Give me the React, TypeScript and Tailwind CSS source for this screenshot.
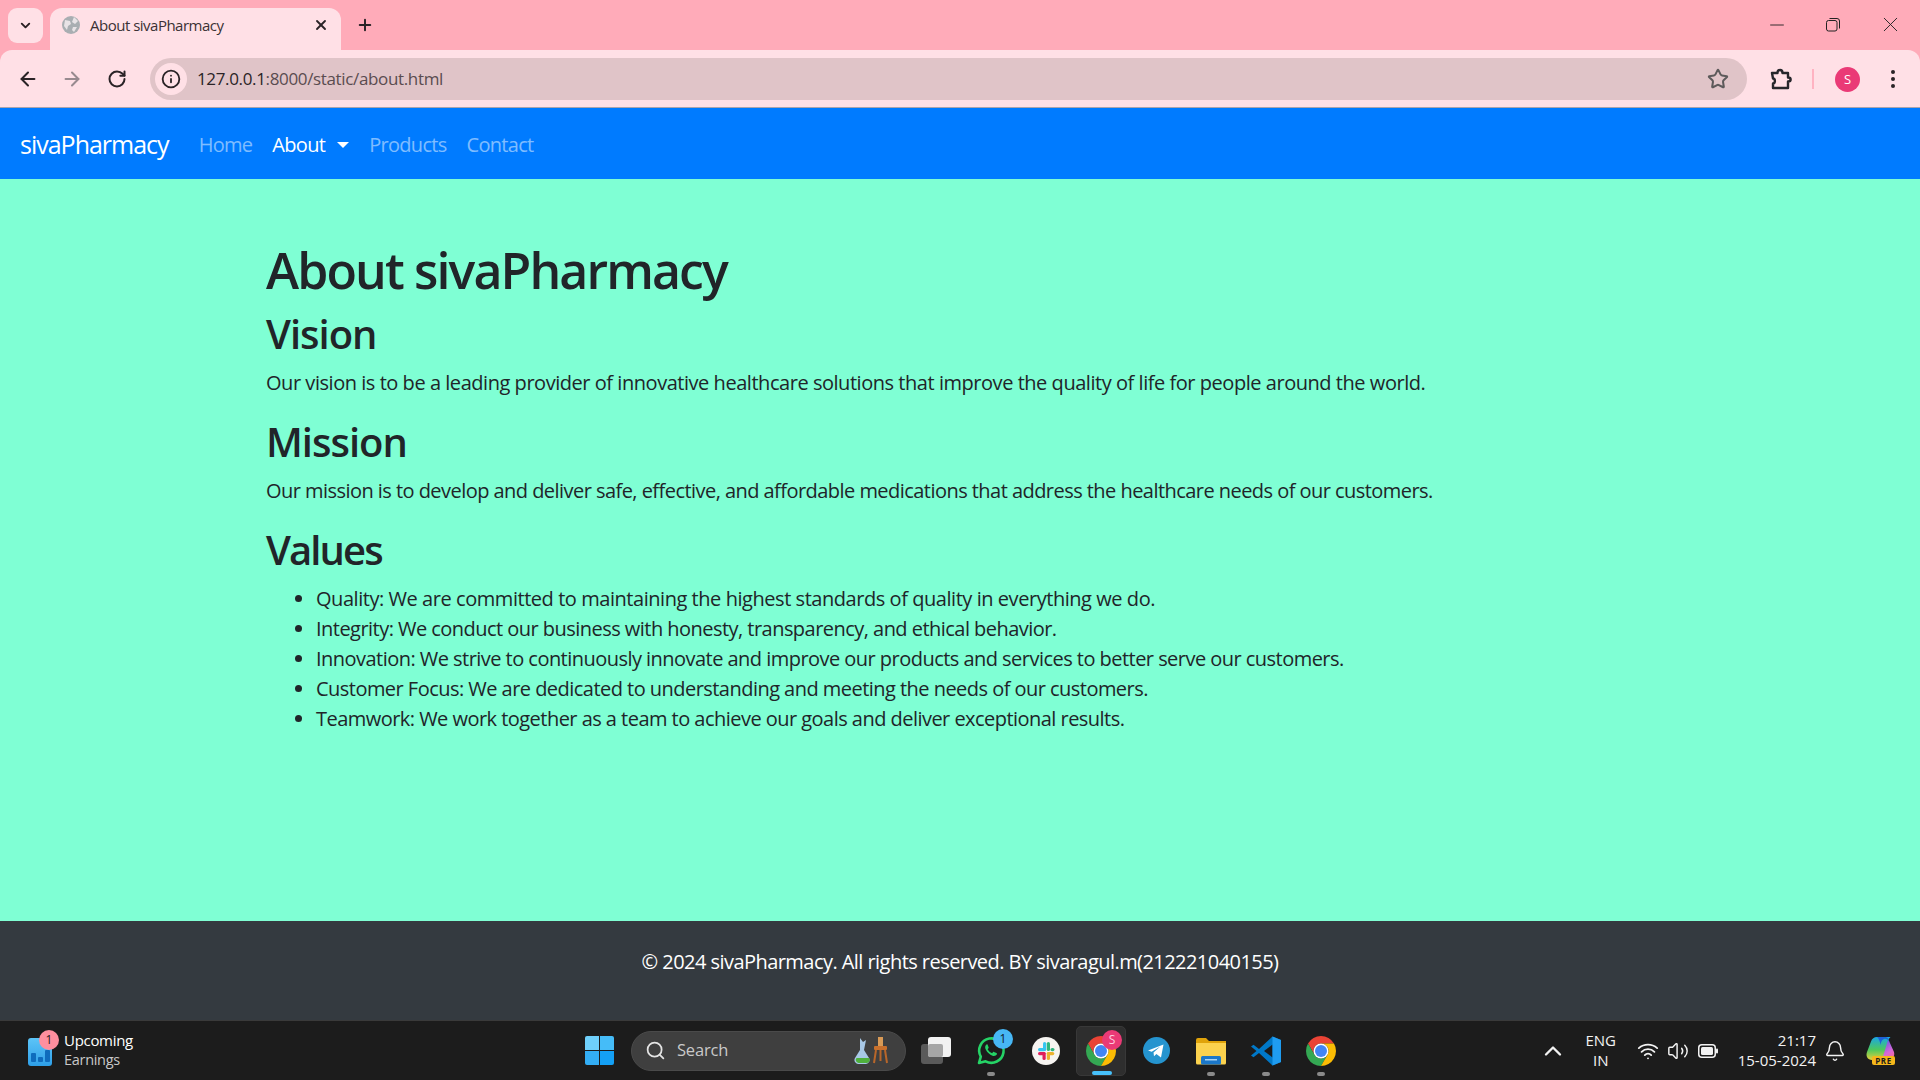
import React from 'react';
import { ArrowLeft, ArrowRight, RotateCw, Info, Star, X, Plus, ChevronDown, ChevronUp, Minus, Search, Bell, Wifi, Volume2 } from 'lucide-react';

const ChromeLogo = ({ size = 30 }: { size?: number }) => (
  <svg width={size} height={size} viewBox="4 4 40 40">
    <path fill="#ea4335" d="M6.68 14A20 20 0 0 1 41.32 14L24 14A10 10 0 0 0 15.34 29Z" />
    <path fill="#34a853" d="M6.68 14A20 20 0 0 0 24 44L32.66 29A10 10 0 0 1 15.34 29Z" />
    <path fill="#fbbc04" d="M24 44A20 20 0 0 0 41.32 14L24 14A10 10 0 0 1 32.66 29Z" />
    <circle cx="24" cy="24" r="10" fill="#fff" />
    <circle cx="24" cy="24" r="8" fill="#4285f4" />
  </svg>
);

const WhatsApp = () => (
  <svg width="30" height="30" viewBox="0 0 30 30" fill="none">
    <path d="M3 27l1.8-6.4A12.2 12.2 0 1 1 9.6 25.3L3 27z" stroke="#25d366" strokeWidth="2.6" strokeLinejoin="round" />
    <path d="M10.5 8.5c-1.5 1-1.8 3-.6 5.3 1.3 2.6 3.8 5 6.6 5.9 2 .6 3.6 0 4.4-1.5.2-.5 0-.9-.4-1.1l-2.6-1.2c-.4-.2-.7 0-1 .3l-.8 1c-1.900-.7-3.500-2.200-4.500-4l.8-.9c.3-.3.3-.6.2-1l-1-2.500c-.2-.5-.6-.6-1.100-.3z" fill="#25d366" />
  </svg>
);

const Slack = () => (
  <svg width="28" height="28" viewBox="0 0 28 28">
    <circle cx="14" cy="14" r="14" fill="#f6f4f1" />
    <rect x="11" y="5" width="3.200" height="9" rx="1.600" fill="#36c5f0" />
    <rect x="6" y="11" width="7.500" height="3.200" rx="1.600" fill="#36c5f0" />
    <rect x="14.800" y="5" width="3.200" height="9" rx="1.600" fill="#2eb67d" />
    <rect x="18.500" y="11" width="4" height="3.200" rx="1.600" fill="#2eb67d" />
    <rect x="14.800" y="15" width="7.500" height="3.200" rx="1.600" fill="#ecb22e" />
    <rect x="14.800" y="15" width="3.200" height="8" rx="1.600" fill="#ecb22e" />
    <rect x="6" y="15" width="7.500" height="3.200" rx="1.600" fill="#e01e5a" />
    <rect x="10.500" y="15" width="3.200" height="8" rx="1.600" fill="#e01e5a" />
  </svg>
);

const Telegram = () => (
  <svg width="27" height="27" viewBox="0 0 27 27">
    <circle cx="13.500" cy="13.500" r="13.500" fill="#2594cf" />
    <path d="M5 13.500l15.500-6-2.500 13-4.600-3.400-2.400 2.200-.5-3.700 6.800-6-8.600 5.200z" fill="#fff" />
  </svg>
);

const Folder = () => (
  <svg width="30" height="28" viewBox="0 0 30 28">
    <path d="M0 3a2 2 0 0 1 2-2h8l3 3h17v6H0z" fill="#e0a30a" />
    <path d="M0 6h30v20a1.500 1.500 0 0 1-1.500 1.500h-27A1.500 1.500 0 0 1 0 26z" fill="#fbd24e" />
    <rect x="5" y="19" width="20" height="8.500" rx="1.500" fill="#1b77c9" />
    <rect x="9" y="22" width="12" height="1.500" fill="#a8d4f5" />
  </svg>
);

const VsCode = () => (
  <svg width="30" height="30" viewBox="0 0 30 30">
    <path d="M21.500 0.500L30 4v22l-8.500 3.500L8 17l-5.500 4.300L0 19.500 5.500 15 0 10.500l2.500-1.800L8 13z" fill="#0078c8" />
    <path d="M21.500 8.500L13 15l8.500 6.500z" fill="#1b1b1b" />
    <path d="M21.500 0.500L30 4v22l-8.500 3.500z" fill="#1f9cf0" />
  </svg>
);

const Copilot = () => (
  <div className="relative w-[30px] h-[30px]">
    <svg width="30" height="25" viewBox="0 0 30 25">
      <defs>
        <linearGradient id="cpa" x1="0.500" y1="0" x2="0.500" y2="1">
          <stop offset="0" stopColor="#1aa6e6" />
          <stop offset="0.55" stopColor="#4cc95e" />
          <stop offset="1" stopColor="#e6cf3a" />
        </linearGradient>
        <linearGradient id="cpb" x1="0.300" y1="0" x2="0.800" y2="1">
          <stop offset="0" stopColor="#1e62d8" />
          <stop offset="0.35" stopColor="#8a5ee0" />
          <stop offset="0.7" stopColor="#d868d8" />
          <stop offset="1" stopColor="#f46a9c" />
        </linearGradient>
      </defs>
      <path d="M12 1h7c3 0 4.500 2 5.500 5l4.500 10c1 4-1 7-5 7H14l3-12c.6-3-1-7-5-10z" fill="url(#cpb)" />
      <path d="M12 1c-3 0-5 1.500-6 4.500L2 16c-1.500 4 .5 8 5 8h6c3 0 4.500-2 5.500-5l3-10c.8-3 1.500-6 4-8z" fill="url(#cpa)" />
      <path d="M12 1h8c2 0 3.500 1 4.500 5C23 3 21 2.500 19 3c-2 .5-3 3-3.500 6C15 5 13.500 2 12 1z" fill="#1e62d8" />
    </svg>
    <span className="absolute right-[0px] bottom-[1px] w-[23px] h-[9px] rounded-[2px] bg-[#f5b71b] text-[#1c1c1c] text-[8px] leading-[9px] font-bold text-center tracking-[0.5px]">PRE</span>
  </div>
);

const Dot = () => <span className="w-[8px] h-[4px] rounded-full bg-[#8a8a8a]" />;

const TaskItem = ({ children, dot, active }: { children: React.ReactNode; dot?: boolean; active?: boolean }) => (
  <div className={`relative w-[50px] h-[50px] mr-[5px] flex items-center justify-center rounded-[5px] ${active ? 'bg-[#2e2e2e] border border-[#383838]' : ''}`}>
    {children}
    {dot && <span className="absolute bottom-0 left-0 right-0 flex justify-center"><Dot /></span>}
    {active && <span className="absolute bottom-0 left-[15px] w-[20px] h-[4px] rounded-full bg-[#47c1fb]" />}
  </div>
);

const Badge = ({ label, color, text }: { label: string; color: string; text: string }) => (
  <span className={`absolute top-[3px] right-[3px] w-[20px] h-[20px] rounded-full text-[12px] leading-[20px] text-center ${color} ${text}`}>{label}</span>
);

const BrowserChrome = () => (
  <header className="h-[108px] bg-[#ffabb9] flex flex-col">
    <div className="h-[50px] flex items-end pl-[8px]">
      <div className="w-[35px] h-[35px] mb-[7px] rounded-[9px] bg-[#ffe0e6] flex items-center justify-center">
        <ChevronDown size={15} strokeWidth={3} className="text-[#2a1f22]" />
      </div>
      <div className="ml-[7px] w-[291px] h-[42px] rounded-t-[12px] bg-[#ffe0e6] flex items-center pl-[12px] pr-[12px] pb-[8px]">
        <svg width="18" height="18" viewBox="0 0 18 18" className="shrink-0">
          <circle cx="9" cy="9" r="9" fill="#a9aeb2" />
          <path d="M3 4l5 1 1 3-3 2-1 4-3-4zM12 1l4 4-3 3-3-2zM11 11l4 0-3 5-2-2z" fill="#e8e3e6" />
        </svg>
        <span className="ml-[10px] text-[15px] text-[#3b3134] tracking-[-0.5px] flex-1">About sivaPharmacy</span>
        <X size={16} strokeWidth={2.800} className="text-[#2a2326]" />
      </div>
      <Plus size={18} strokeWidth={2.600} className="ml-[15px] mb-[16px] text-[#2a2326]" />
      <div className="ml-auto flex items-center h-full mr-[17px] gap-[38px] pb-[1px]">
        <Minus size={22} strokeWidth={1} className="text-[#222]" />
        <svg width="14" height="14" viewBox="0 0 14 14" fill="none" stroke="#222" strokeWidth="1">
          <rect x="0.500" y="2.500" width="10.500" height="10.500" rx="2" />
          <path d="M3.500 0.500h7.500a2.500 2.500 0 0 1 2.500 2.500v7.500" />
        </svg>
        <X size={25} strokeWidth={0.900} className="text-[#222]" />
      </div>
    </div>
    <div className="h-[58px] rounded-t-[12px] bg-[#ffe0e6] border-b border-[#a9a3ac] flex items-center pl-[17px] pr-[17px] pt-[1px]">
      <ArrowLeft size={22} strokeWidth={2.200} className="text-[#2a2326]" />
      <ArrowRight size={22} strokeWidth={2.200} className="ml-[22px] text-[#988a8f]" />
      <RotateCw size={20} strokeWidth={2.400} className="ml-[24px] text-[#2a2326]" />
      <div className="ml-[23px] w-[1597px] h-[42px] rounded-full bg-[#e0c4c8] flex items-center pl-[5px] pr-[18px]">
        <span className="w-[32px] h-[32px] rounded-full bg-[#ffe0e6] flex items-center justify-center">
          <Info size={20} strokeWidth={2.200} className="text-[#2a2326]" />
        </span>
        <span className="ml-[10px] text-[17px] text-[#2a2326] tracking-[-0.35px]">
          127.0.0.1<span className="text-[#5a4c50]">:8000/static/about.html</span>
        </span>
        <Star size={22} strokeWidth={2.200} className="ml-auto text-[#5d5a5b]" />
      </div>
      <svg width="22" height="22" viewBox="0 0 22 22" fill="none" stroke="#26262b" strokeWidth="2.400" strokeLinejoin="round" className="ml-[23px] shrink-0">
        <path d="M2 5h5.500c0-4 5-4 5 0H18v4.500c3.500 0 3.500 4 0 4V20H3v-4.500c2.500 0 2.500-5 0-5z" />
      </svg>
      <span className="ml-[20px] w-[2px] h-[20px] bg-[#ffb3c2]" />
      <span className="ml-[21px] w-[25px] h-[25px] rounded-full bg-[#ea3a76] text-white text-[13px] leading-[25px] text-center">S</span>
      <div className="ml-[31px] flex flex-col gap-[3px]">
        <span className="w-[4px] h-[4px] rounded-full bg-[#2a2326]" />
        <span className="w-[4px] h-[4px] rounded-full bg-[#2a2326]" />
        <span className="w-[4px] h-[4px] rounded-full bg-[#2a2326]" />
      </div>
    </div>
  </header>
);

const Navbar = () => (
  <nav className="h-[71px] bg-[#007bff] flex items-center pl-[20px] pt-[2px]">
    <a className="text-[25px] text-white tracking-[-1px] mr-[30px]">sivaPharmacy</a>
    <ul className="flex items-center text-[20px] tracking-[-0.700px] text-white/50">
      <li className="mr-[20px]">Home</li>
      <li className="mr-[20px] flex items-center text-white">
        About
        <span className="ml-[12px] w-0 h-0 border-x-[6px] border-x-transparent border-t-[6px] border-t-white" />
      </li>
      <li className="mr-[20px]">Products</li>
      <li>Contact</li>
    </ul>
  </nav>
);

const values = [
  'Integrity: We conduct our business with honesty, transparency, and ethical behavior.',
  'Innovation: We strive to continuously innovate and improve our products and services to better serve our customers.',
  'Customer Focus: We are dedicated to understanding and meeting the needs of our customers.',
  'Teamwork: We work together as a team to achieve our goals and deliver exceptional results.',
];

const Main = () => (
  <main className="flex-1 bg-[#7fffd4] text-[#212529] text-[20px] leading-[30px] tracking-[-0.535px] pt-[61px] pl-[266px] pr-[266px]">
    <h1 className="text-[50px] leading-[60px] font-[550] mb-[10px] tracking-[-1.870px]">About sivaPharmacy</h1>
    <h2 className="text-[40px] leading-[48px] font-[550] mb-[10px] tracking-[-1px]">Vision</h2>
    <p className="mb-[20px] tracking-[-0.46px]">Our vision is to be a leading provider of innovative healthcare solutions that improve the quality of life for people around the world.</p>
    <h2 className="text-[40px] leading-[48px] font-[550] mb-[10px] tracking-[-1px]">Mission</h2>
    <p className="mb-[20px] tracking-[-0.545px]">Our mission is to develop and deliver safe, effective, and affordable medications that address the healthcare needs of our customers.</p>
    <h2 className="text-[40px] leading-[48px] font-[550] mb-[10px] tracking-[-1.900px]">Values</h2>
    <ul className="list-disc pl-[50px]">
      <li className="tracking-[-0.45px]">Quality: We are committed to maintaining the highest standards of quality in everything we do.</li>
      {values.map((v) => (
        <li key={v}>{v}</li>
      ))}
    </ul>
  </main>
);

const Footer = () => (
  <footer className="h-[99px] bg-[#343a40] text-white text-[20px] leading-[30px] tracking-[-0.550px] text-center pt-[26px]">
    © 2024 sivaPharmacy. All rights reserved. BY sivaragul.m(212221040155)
  </footer>
);

const Taskbar = () => (
  <div className="h-[60px] bg-[#1c1c1c] border-t border-[#3a3a3a] flex items-center text-white">
    <div className="w-[585px] pl-[28px] flex items-center shrink-0">
      <div className="relative w-[24px] h-[28px] mt-[2px] rounded-[3px] bg-gradient-to-b from-[#5cc4f7] to-[#2d9fe8] flex items-end justify-center gap-[2px] pb-[4px]">
        <span className="w-[5px] h-[9px] bg-[#0f6cbd] rounded-[1px]" />
        <span className="w-[5px] h-[5px] bg-[#0f6cbd] rounded-[1px]" />
        <span className="w-[5px] h-[12px] bg-[#0f6cbd] rounded-[1px]" />
        <span className="absolute top-[-8px] right-[-7px] w-[20px] h-[20px] rounded-full bg-[#ff8f9f] text-[#2a1a1d] text-[12px] leading-[20px] text-center">1</span>
      </div>
      <div className="ml-[12px] text-[15px] leading-[20px] tracking-[-0.300px] mt-[-1px]">
        <div>Upcoming</div>
        <div className="text-[#c8c8c8] text-[14.500px]">Earnings</div>
      </div>
    </div>
    <div className="grid grid-cols-2 gap-[1px] w-[29px] h-[29px] shrink-0">
      <span className="bg-[#6fd0fb] rounded-tl-[2px]" />
      <span className="bg-[#45bcf8] rounded-tr-[2px]" />
      <span className="bg-[#33aef5] rounded-bl-[2px]" />
      <span className="bg-[#14a0f5] rounded-br-[2px]" />
    </div>
    <div className="ml-[17px] w-[275px] h-[40px] rounded-full bg-[#3f3f3f] border border-[#4a4a4a] flex items-center pl-[13px] pr-[17px] shrink-0">
      <Search size={21} strokeWidth={2} className="text-[#e4e4e4]" />
      <span className="ml-[11px] text-[16.500px] text-[#c9c9c9] tracking-[-0.200px]">Search</span>
      <svg width="34" height="30" viewBox="0 0 34 30" className="ml-auto">
        <path d="M6 2l3 4 3-2-1 5-1 5 5 8a4 4 0 0 1-3 6H4a4 4 0 0 1-3-6l5-8z" fill="#a8c8e6" />
        <path d="M2.500 22h12.500a3 3 0 0 1-2 5H4.500a3 3 0 0 1-2-5z" fill="#4fb03c" />
        <rect x="24" y="1" width="5" height="9" fill="#d89a56" />
        <rect x="20" y="10" width="13" height="4" rx="1" fill="#c8702c" />
        <path d="M22 14l-2 13M31 14l2 13M26.500 14v11" stroke="#b8662a" strokeWidth="2" fill="none" />
      </svg>
    </div>
    <div className="relative w-[50px] h-[50px] ml-[5px] shrink-0">
      <span className="absolute left-[10px] top-[18px] w-[22px] h-[20px] rounded-[3px] bg-[#5a5a5a]" />
      <span className="absolute left-[17px] top-[11px] w-[23px] h-[20px] rounded-[3px] bg-[#f2f2f2]" />
      <span className="absolute left-[17px] top-[18px] w-[15px] h-[13px] rounded-[2px] bg-[#a6a6a6]" />
    </div>
    <div className="flex items-center ml-[5px] shrink-0">
      <TaskItem dot>
        <WhatsApp />
        <Badge label="1" color="bg-[#47b7f5]" text="text-[#10222e]" />
      </TaskItem>
      <TaskItem><Slack /></TaskItem>
      <TaskItem active>
        <ChromeLogo />
        <Badge label="S" color="bg-[#ea3a76]" text="text-[#ffd0e0]" />
      </TaskItem>
      <TaskItem><Telegram /></TaskItem>
      <TaskItem dot><Folder /></TaskItem>
      <TaskItem dot><VsCode /></TaskItem>
      <TaskItem dot><ChromeLogo /></TaskItem>
    </div>
    <div className="flex-1 flex items-center justify-end pr-[25px] text-[#f2f2f2]">
      <ChevronUp size={28} strokeWidth={2} className="mr-[11px]" />
      <div className="w-[46px] text-center text-[15px] leading-[20px] mr-[13px] mt-[-2px]">ENG<br />IN</div>
      <Wifi size={22} strokeWidth={2} className="mr-[8px]" />
      <Volume2 size={22} strokeWidth={1.600} className="mr-[9px]" />
      <svg width="20" height="14" viewBox="0 0 20 14" className="mr-[20px]">
        <rect x="0.750" y="0.750" width="16.500" height="12.500" rx="3" fill="none" stroke="#f2f2f2" strokeWidth="1.500" />
        <rect x="3" y="3" width="12" height="8" rx="1.500" fill="#f2f2f2" />
        <rect x="18" y="4.500" width="2" height="5" rx="1" fill="#f2f2f2" />
      </svg>
      <div className="text-right text-[15px] leading-[20px] mr-[8px] mt-[-2px]">21:17<br />15-05-2024</div>
      <Bell size={22} strokeWidth={1.600} className="mr-[19px]" />
      <Copilot />
    </div>
  </div>
);

export default function App() {
  return (
    <div className="w-[1920px] h-[1080px] overflow-hidden flex flex-col font-['Open_Sans','Noto_Sans',sans-serif]">
      <BrowserChrome />
      <Navbar />
      <Main />
      <Footer />
      <Taskbar />
    </div>
  );
}
